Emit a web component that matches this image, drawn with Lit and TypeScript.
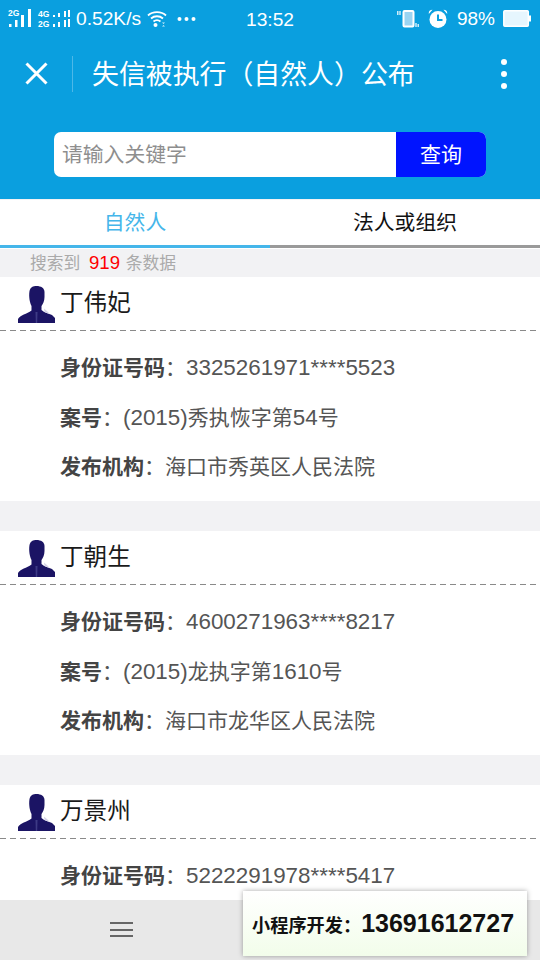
import { LitElement, html, css, svg } from "lit";
import { customElement } from "lit/decorators.js";

const records = [
  { name: "丁伟妃", id: "3325261971****5523", no: "(2015)秀执恢字第54号", org: "海口市秀英区人民法院" },
  { name: "丁朝生", id: "4600271963****8217", no: "(2015)龙执字第1610号", org: "海口市龙华区人民法院" },
  { name: "万景州", id: "5222291978****5417", no: "", org: "" },
];

const mixed = (s: string) =>
  s.split(/([\x00-\x7f]+)/).map((p, i) => (i % 2 ? html`<span class="lat">${p}</span>` : p));

const avatar = svg`<svg class="avatar" width="37" height="37" viewBox="0 0 37 37">
  <path fill="#1b1464" d="M11.500 5 C12.500 1 15 0 18.500 0 C23 0 26.500 2 26.500 6 L26.500 11 C26.500 15 25 18 23.500 20 L23.500 24 C26 26.500 31 27.500 34 29 L37 32 L37 37 L0 37 L0 33 C2 29 9 28 13.500 24.500 L13.500 20 C12 17 10.500 11 11.500 5 Z"/>
  <path fill="#d5d3e6" d="M26 22.500 L30 26 L32 28.200 L26.500 26 Z"/>
  <path fill="#3d3a85" d="M17.500 26 L19.500 26 L19.200 37 L17.800 37 Z"/>
</svg>`;

@customElement("app-root")
export class AppRoot extends LitElement {
  static styles = css`
    :host {
      display: block;
      width: 540px;
      height: 960px;
      position: relative;
      overflow: hidden;
      background: #f2f2f4;
      font-family: "Liberation Sans", "Noto Sans CJK SC", sans-serif;
    }
    .top { background: #0a9fdf; color: #fff; height: 199px; display: flex; flex-direction: column; }
    .status { height: 37px; display: flex; align-items: center; position: relative; }
    .status svg { display: block; flex: none; }
    .speed { font-size: 19.2px; line-height: 22px; }
    .wifi { margin-left: 6px; }
    .dots { margin-left: 10px; }
    .time { position: absolute; left: 246px; top: 9px; font-size: 19.2px; line-height: 22px; }
    .right { margin-left: auto; display: flex; align-items: center; padding-right: 9px; }
    .alarm { margin-left: 9px; }
    .pct { margin: 0 8px 0 9px; font-size: 19px; line-height: 22px; }
    .nav { height: 73px; display: flex; align-items: center; }
    .close { margin-left: 25px; flex: none; }
    .sep { width: 1px; height: 36px; background: #4db8e8; margin-left: 24px; flex: none; }
    .title { margin-left: 19px; font-size: 26.9px; line-height: 36px; padding-top: 2px; white-space: nowrap; }
    .more { margin-left: auto; margin-right: 33px; display: flex; flex-direction: column; gap: 6px; }
    .more i { display: block; width: 6px; height: 6px; border-radius: 50%; background: #fff; }
    .search { margin: 22px 54px 0; height: 45px; display: flex; border-radius: 7px; overflow: hidden; background: #fff; }
    .input { flex: 1; color: #8e8e8e; font-size: 20.8px; line-height: 45px; padding-left: 8px; }
    .btn { width: 90px; background: #0014ff; color: #fff; font-size: 21px; line-height: 45px; text-align: center; }
    .tabs { height: 49px; margin-top: 1px; display: flex; background: #fff; }
    .tab { flex: 1; height: 45px; border-bottom: 3px solid #9a9a9a; text-align: center; font-size: 20.8px; line-height: 45px; color: #111; }
    .tab.on { color: #45b6ea; border-bottom-color: #45b6ea; }
    .count { height: 28px; padding-left: 30px; color: #aaaaaa; font-size: 16.8px; line-height: 28px; }
    .count b { color: #f00; font-weight: 400; font-size: 18.6px; margin: 0 1px 0 4px; }
    .card { background: #fff; margin-bottom: 30px; height: 224px; }
    .head { height: 53px; display: flex; align-items: center; padding-left: 18px; }
    .avatar { flex: none; margin-top: 1px; }
    .name { margin-left: 5px; font-size: 23.6px; line-height: 28px; color: #1a1a1a; padding-bottom: 2px; }
    .dash { height: 1px; background: repeating-linear-gradient(90deg, #8a8a8a 0 6px, transparent 6px 10px); }
    .rows { padding: 12px 0 0 60px; }
    .row { height: 49.6px; line-height: 49.6px; font-size: 21px; color: #555; white-space: nowrap; }
    .row b { font-weight: 700; color: #444; }
    .lat { font-size: 22.4px; }
    .bottom { position: absolute; left: 0; right: 0; top: 900px; height: 60px; background: #e8e8e8; }
    .menu { position: absolute; left: 110px; top: 22px; width: 23px; display: flex; flex-direction: column; gap: 4.5px; }
    .menu i { display: block; height: 2px; background: #666; }
    .ad { position: absolute; left: 243px; top: 891px; width: 284px; height: 65px; box-sizing: border-box; background: linear-gradient(#ffffff, #f2fdea); box-shadow: 0 0 5px rgba(0,0,0,.35); color: #111; display: flex; align-items: center; padding-left: 9px; font-weight: 700; font-size: 18.2px; white-space: nowrap; }
    .ad span { font-size: 25px; }
  `;

  render() {
    return html`
      <div class="top">
        <div class="status">
          <svg width="76" height="37" viewBox="0 0 76 37" fill="#fff">
            <text x="8" y="16" font-size="8.500" font-weight="700" font-family="Liberation Sans">2G</text>
            <rect x="9" y="24" width="2.500" height="3"/><rect x="15" y="20" width="2.500" height="7"/><rect x="21" y="15" width="3" height="12"/><rect x="28" y="9" width="3" height="18"/>
            <text x="38" y="17" font-size="8.500" font-weight="700" font-family="Liberation Sans">4G</text>
            <text x="38" y="27" font-size="8.500" font-weight="700" font-family="Liberation Sans">2G</text>
            <rect x="53" y="15" width="2" height="2"/><rect x="53" y="24" width="2" height="3"/>
            <rect x="58" y="13" width="2" height="4"/><rect x="58" y="22" width="2" height="5"/>
            <rect x="64" y="11" width="2" height="6"/><rect x="64" y="20" width="2" height="7"/>
            <rect x="68" y="10" width="2" height="7"/><rect x="68" y="19" width="2" height="8"/>
          </svg>
          <span class="speed">0.52K/s</span>
          <svg class="wifi" width="20" height="18" viewBox="0 0 20 18" fill="none" stroke="#fff" stroke-width="1.800">
            <path d="M1 5.500 C5.500 1 14.500 1 19 5.500"/><path d="M4 8.500 C7.500 5.500 12.500 5.500 16 8.500"/><path d="M6.500 11.500 C8.500 10 11.500 10 13.500 11.500"/>
            <circle cx="8.500" cy="15" r="2" fill="#fff" stroke="none"/>
            <path d="M15 12.500h3l-1.500 1.500Z M15 16.500h3l-1.500-1.500Z" fill="#cfeefb" stroke="none"/>
          </svg>
          <svg class="dots" width="19" height="6" viewBox="0 0 19 6" fill="#fff"><circle cx="2.500" cy="3" r="2"/><circle cx="9.500" cy="3" r="2"/><circle cx="16.500" cy="3" r="2"/></svg>
          <span class="time">13:52</span>
          <div class="right">
            <svg width="22" height="18" viewBox="0 0 22 18">
              <rect x="6.500" y="1" width="10" height="15.500" rx="1" fill="#9ad4f2" stroke="#fff" stroke-width="2"/>
              <path d="M.8 1v4M3 1v4M19 13v4M21.200 14v3" stroke="#fff" stroke-width="1.200" fill="none"/>
            </svg>
            <svg class="alarm" width="20" height="19" viewBox="0 0 20 19">
              <circle cx="10" cy="10.500" r="8.500" fill="#fff"/>
              <path d="M10 5.500v5.500h4.500" stroke="#0a9fdf" stroke-width="2" fill="none"/>
              <path d="M.8 5 C.5 2 2 .8 4.500 .8 Z M19.200 5 C19.500 2 18 .8 15.500 .8 Z" fill="#fff"/>
            </svg>
            <span class="pct">98%</span>
            <svg width="28" height="17" viewBox="0 0 28 17">
              <rect x=".8" y=".8" width="24.500" height="15.400" rx="1" fill="#e6f6fe" stroke="#fff" stroke-width="1.500"/>
              <rect x="26" y="5.500" width="2" height="6" fill="#fff"/>
            </svg>
          </div>
        </div>
        <div class="nav">
          <svg class="close" width="23" height="23" viewBox="0 0 23 23" stroke="#fff" stroke-width="3"><path d="M1.500 1.500 L21.500 21.500 M21.500 1.500 L1.500 21.500"/></svg>
          <div class="sep"></div>
          <div class="title">失信被执行（自然人）公布</div>
          <div class="more"><i></i><i></i><i></i></div>
        </div>
        <div class="search">
          <div class="input">请输入关键字</div>
          <div class="btn">查询</div>
        </div>
      </div>
      <div class="tabs">
        <div class="tab on">自然人</div>
        <div class="tab">法人或组织</div>
      </div>
      <div class="count">搜索到 <b>919</b> 条数据</div>
      ${records.map(
        (r) => html`
          <div class="card">
            <div class="head">${avatar}<span class="name">${r.name}</span></div>
            <div class="dash"></div>
            <div class="rows">
              <div class="row"><b>身份证号码</b>：${mixed(r.id)}</div>
              ${r.no ? html`<div class="row"><b>案号</b>：${mixed(r.no)}</div>
              <div class="row"><b>发布机构</b>：${r.org}</div>` : ""}
            </div>
          </div>
        `
      )}
      <div class="bottom"><div class="menu"><i></i><i></i><i></i></div></div>
      <div class="ad">小程序开发：<span>13691612727</span></div>
    `;
  }
}
